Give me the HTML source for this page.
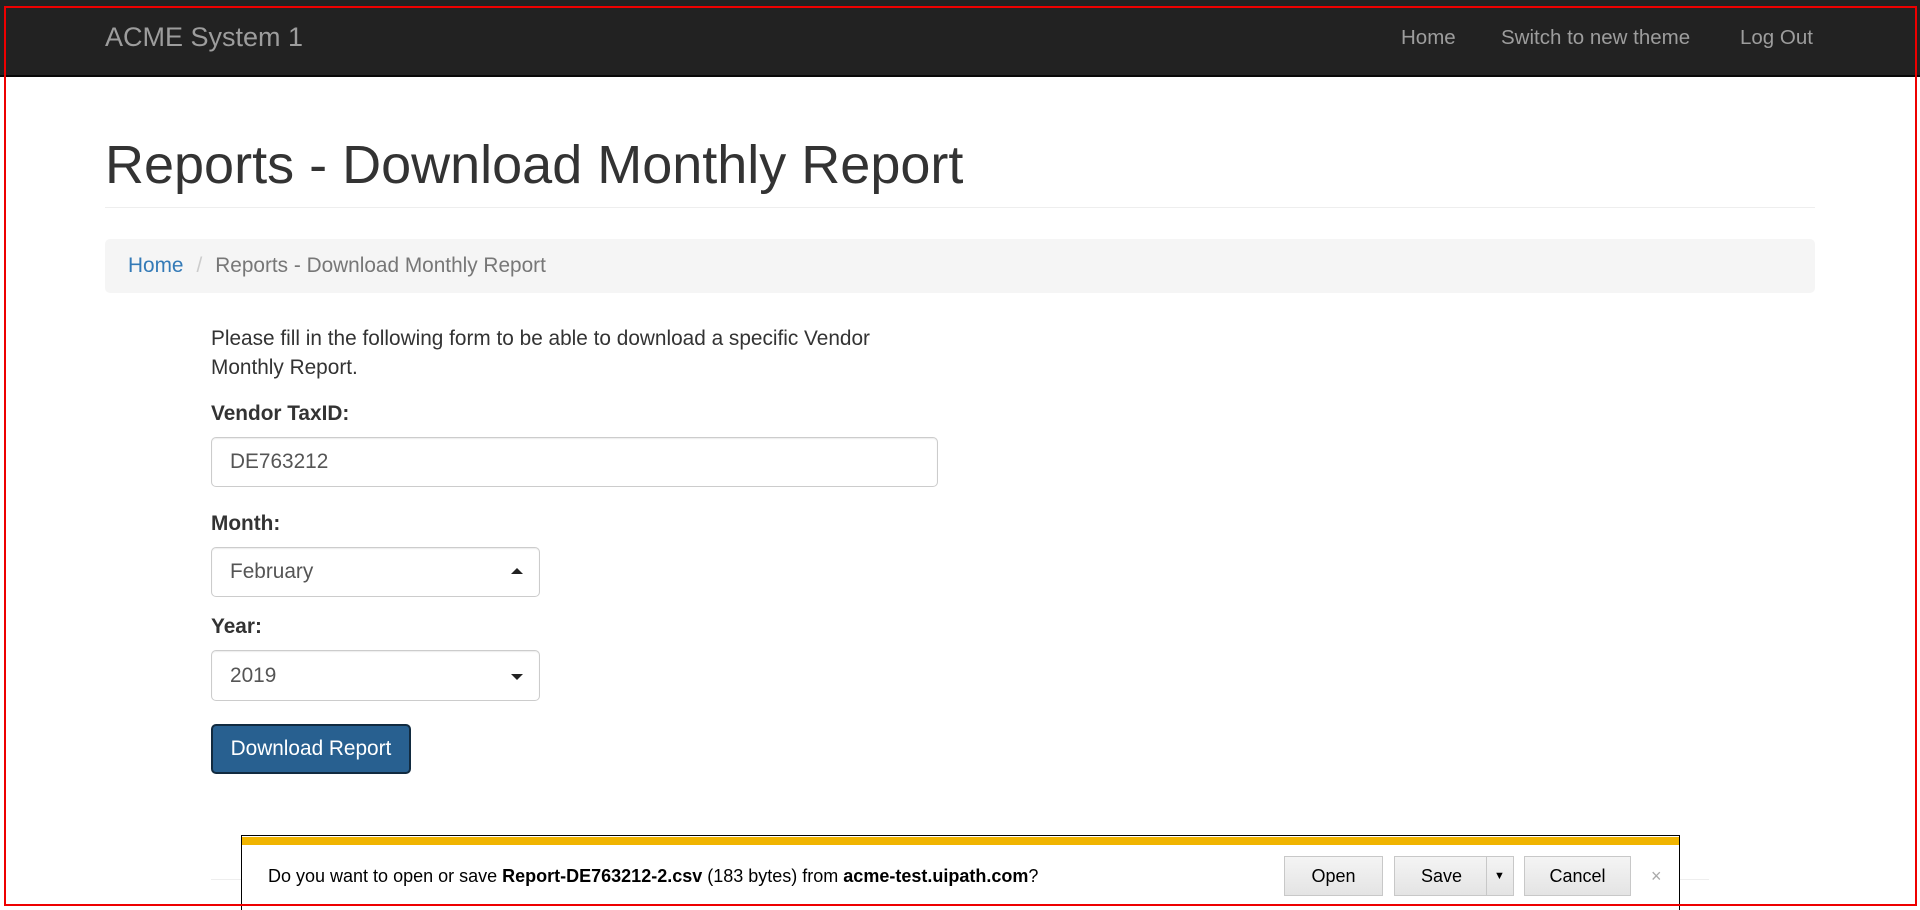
<!DOCTYPE html>
<html><head><meta charset="utf-8"><style>
*{box-sizing:border-box;margin:0;padding:0}
body{width:1920px;height:910px;overflow:hidden;background:#fff;font-family:"Liberation Sans",Arial,sans-serif;color:#333;position:relative;font-size:20.8px}
.nav{position:absolute;left:0;top:0;width:1920px;height:77px;background:#222;border-bottom:2px solid #080808}
.brand{position:absolute;left:105px;top:22px;font-size:27px;color:#9d9d9d}
.nl{position:absolute;top:26px;font-size:20.5px;color:#9d9d9d}
h1{position:absolute;left:105px;top:138px;font-size:54px;font-weight:500;color:#333;line-height:1}
.hr1{position:absolute;left:105px;top:207px;width:1710px;height:1px;background:#eee}
.bc{position:absolute;left:105px;top:239px;width:1710px;height:54px;background:#f5f5f5;border-radius:5px;font-size:20.8px;line-height:54px;padding-left:23px;color:#777}
.bc a{color:#337ab7;text-decoration:none}
.bc .s{color:#ccc;padding:0 13px}
.p{position:absolute;left:211px;top:324px;font-size:20.8px;line-height:29px;width:700px}
.lbl{position:absolute;left:211px;font-size:20.8px;font-weight:bold}
.in{position:absolute;left:211px;border:1px solid #ccc;border-radius:5px;box-shadow:inset 0 1px 1px rgba(0,0,0,.075);padding-left:18px;font-size:20.8px;color:#555;display:flex;align-items:center}
.car{position:absolute;right:16px;top:50%;width:0;height:0;border-left:6px solid transparent;border-right:6px solid transparent}
.btn{position:absolute;left:211px;top:724px;width:200px;height:50px;background:#286090;border:2px solid #122b40;border-radius:5px;color:#fff;font-size:20.8px;text-align:center;line-height:46px}
.hr2{position:absolute;left:211px;top:879px;width:1498px;height:1px;background:#eee}
.dlg{position:absolute;left:241px;top:835px;width:1439px;height:75px;background:#fff;border:1px solid #000;border-bottom:none}
.yb{position:absolute;left:0;top:1px;width:100%;height:8px;background:#f0b400}
.dt{position:absolute;left:26px;top:30px;font-size:18px;color:#000}
.db{position:absolute;top:20px;height:40px;background:linear-gradient(#f4f4f4,#e4e4e4);border:1px solid #c8c8c8;font-size:18px;color:#000;text-align:center;line-height:38px}
.red{position:absolute;left:4px;top:6px;width:1913px;height:900px;border:2px solid #e00;pointer-events:none}
</style></head><body>
<div class="nav">
<div class="brand">ACME System 1</div>
<div class="nl" style="left:1401px">Home</div>
<div class="nl" style="left:1501px">Switch to new theme</div>
<div class="nl" style="left:1740px">Log Out</div>
</div>
<h1>Reports - Download Monthly Report</h1>
<div class="hr1"></div>
<div class="bc"><a>Home</a><span class="s">/</span>Reports - Download Monthly Report</div>
<div class="p">Please fill in the following form to be able to download a specific Vendor Monthly Report.</div>
<div class="lbl" style="top:402px">Vendor TaxID:</div>
<div class="in" style="top:437px;width:727px;height:50px">DE763212</div>
<div class="lbl" style="top:512px">Month:</div>
<div class="in" style="top:547px;width:329px;height:50px">February<span class="car" style="border-bottom:6px solid #222;margin-top:-4px"></span></div>
<div class="lbl" style="top:615px">Year:</div>
<div class="in" style="top:650px;width:329px;height:51px">2019<span class="car" style="border-top:6px solid #222;margin-top:-2px"></span></div>
<div class="btn">Download Report</div>
<div class="hr2"></div>
<div class="dlg">
<div class="yb"></div>
<div class="dt">Do you want to open or save <b>Report-DE763212-2.csv</b> (183 bytes) from <b>acme-test.uipath.com</b>?</div>
<div class="db" style="left:1042px;width:99px">Open</div>
<div class="db" style="left:1152px;width:120px;text-align:left;padding-left:26px">Save<span style="position:absolute;left:91px;top:0;width:1px;height:38px;background:#c8c8c8"></span><span style="position:absolute;left:99px;top:0;font-size:11px">▼</span></div>
<div class="db" style="left:1282px;width:107px">Cancel</div>
<div style="position:absolute;left:1409px;top:30px;font-size:18px;color:#aaa">×</div>
</div>
<div class="red"></div>
</body></html>
